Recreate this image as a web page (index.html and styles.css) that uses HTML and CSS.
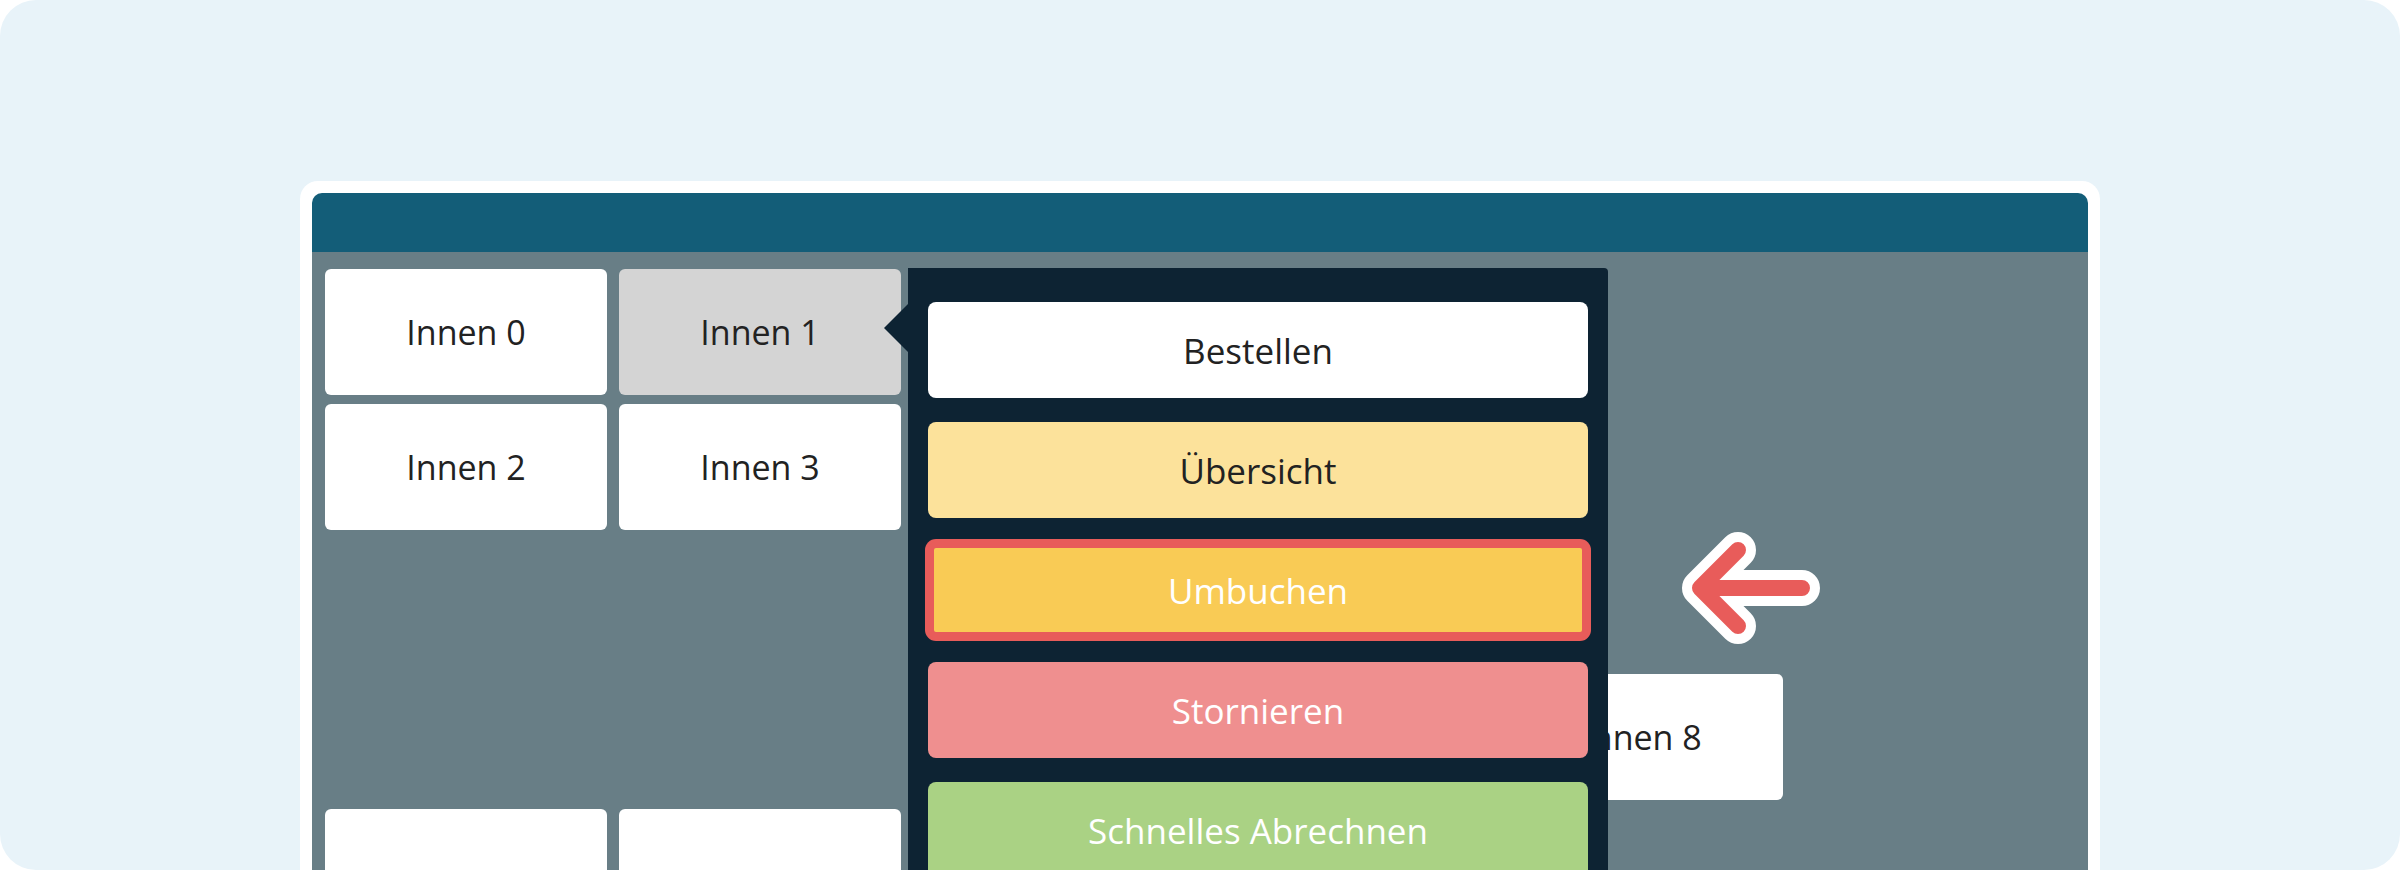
FILE: index.html
```html
<!DOCTYPE html>
<html lang="de">

<head>
    <meta charset="UTF-8">
    <meta name="viewport" content="width=device-width, initial-scale=1.0">
    <title>Tischplan</title>
    <link rel="stylesheet" href="styles.css">
</head>

<body>
    <div class="page">
        <div class="window">
            <!-- Titelleiste -->
            <div class="titlebar"></div>

            <!-- Tischplan -->
            <div class="floor">
                <div class="tables">
                    <div class="table" style="grid-column: 1; grid-row: 1;">Innen 0</div>
                    <div class="table selected" style="grid-column: 2; grid-row: 1;">Innen 1</div>
                    <div class="table" style="grid-column: 1; grid-row: 2;">Innen 2</div>
                    <div class="table" style="grid-column: 2; grid-row: 2;">Innen 3</div>
                    <div class="table" style="grid-column: 5; grid-row: 4;">Innen 8</div>
                    <div class="table" style="grid-column: 1; grid-row: 5;"></div>
                    <div class="table" style="grid-column: 2; grid-row: 5;"></div>
                </div>

                <!-- Kontextmenü -->
                <div class="menu">
                    <button class="menu-btn btn-order">Bestellen</button>
                    <button class="menu-btn btn-overview">Übersicht</button>
                    <button class="menu-btn btn-move">Umbuchen</button>
                    <button class="menu-btn btn-cancel">Stornieren</button>
                    <button class="menu-btn btn-pay">Schnelles Abrechnen</button>
                </div>

                <!-- Hinweis-Pfeil -->
                <svg class="hint-arrow" width="160" height="116" viewBox="0 0 160 116">
                    <path d="M70 20 L32 58 L70 96 M32 58 L134 58" fill="none" stroke="#ffffff" stroke-width="36" stroke-linecap="round" stroke-linejoin="round" />
                    <path d="M70 20 L32 58 L70 96 M32 58 L134 58" fill="none" stroke="#e85c5a" stroke-width="16" stroke-linecap="round" stroke-linejoin="round" />
                </svg>
            </div>
        </div>
    </div>
</body>

</html>
```

FILE: styles.css
```css
/* Grundlayout */
html,
body {
    margin: 0;
    padding: 0;
    height: 870px;
    overflow: hidden;
    background-color: #ffffff;
    font-family: "Open Sans", "Noto Sans", sans-serif;
    color: #222;
}

.page {
    width: 2400px;
    height: 870px;
    box-sizing: border-box;
    padding-top: 181px;
    background-color: #e8f3f9;
    border-radius: 36px;
    overflow: hidden;
}

/* Fenster */
.window {
    width: 1800px;
    height: 689px;
    box-sizing: border-box;
    margin: 0 auto;
    padding: 12px 12px 0;
    background-color: #ffffff;
    border-radius: 18px 18px 0 0;
    display: flex;
    flex-direction: column;
}

.titlebar {
    height: 59px;
    flex-shrink: 0;
    background-color: #135d78;
    border-radius: 10px 10px 0 0;
}

.floor {
    position: relative;
    flex: 1;
    background-color: #687e86;
    overflow: hidden;
}

/* Tische */
.tables {
    display: grid;
    grid-template-columns: repeat(5, 282px);
    grid-auto-rows: 126px;
    column-gap: 12px;
    row-gap: 9px;
    padding: 17px 13px;
}

.table {
    display: flex;
    align-items: center;
    justify-content: center;
    background-color: #ffffff;
    border-radius: 6px;
    font-size: 34px;
    color: #222;
}

.table.selected {
    background-color: #d4d4d4;
}

/* Kontextmenü */
.menu {
    position: absolute;
    left: 596px;
    top: 16px;
    width: 700px;
    height: 700px;
    box-sizing: border-box;
    padding: 34px 20px;
    background-color: #0d2333;
    border-radius: 0 4px 0 0;
    display: flex;
    flex-direction: column;
    gap: 24px;
}

.menu::before {
    content: "";
    position: absolute;
    left: -24px;
    top: 36px;
    border-top: 24px solid transparent;
    border-bottom: 24px solid transparent;
    border-right: 24px solid #0d2333;
}

.menu-btn {
    height: 96px;
    flex-shrink: 0;
    box-sizing: border-box;
    border: none;
    border-radius: 8px;
    font-family: "Open Sans", "Noto Sans", sans-serif;
    font-size: 35px;
    color: #ffffff;
    padding: 1px 0 0;
}

.btn-order {
    background-color: #ffffff;
    color: #222;
}

.btn-overview {
    background-color: #fce29b;
    color: #222;
}

.btn-move {
    background-color: #f9cb55;
    border: 6px solid #e85c5a;
    box-shadow: 0 0 0 3px #e85c5a;
}

.btn-cancel {
    background-color: #ef8f8f;
}

.btn-pay {
    background-color: #aad284;
}

/* Pfeil */
.hint-arrow {
    position: absolute;
    left: 1356px;
    top: 278px;
}
```
